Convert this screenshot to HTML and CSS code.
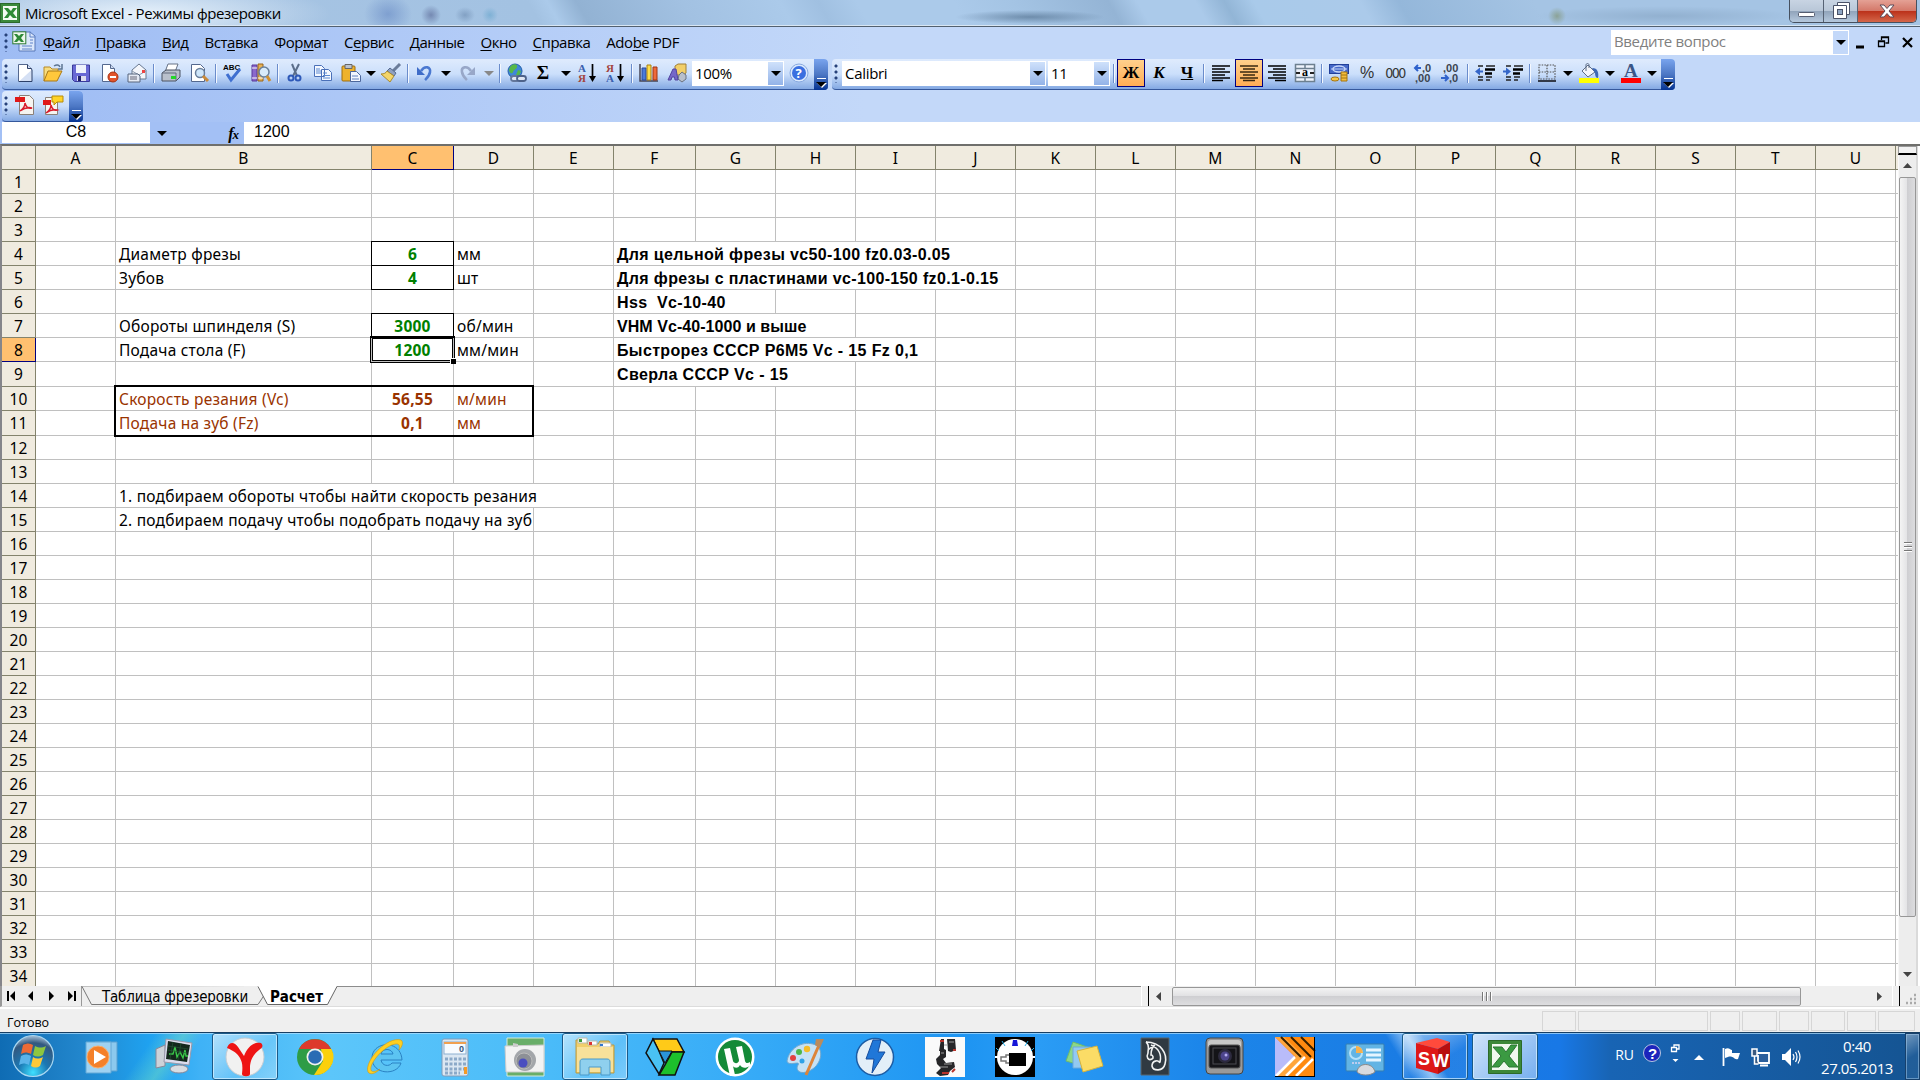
FILE: index.html
```
<!DOCTYPE html>
<html lang="ru">
<head>
    <meta charset="UTF-8">
    <title>Microsoft Excel - Режимы фрезеровки</title>
    <link rel="stylesheet" href="styles.css">
</head>
<body>

    <!-- Title bar -->
    <header class="titlebar">
        <svg class="app-icon" width="20" height="20" viewBox="0 0 20 20"><rect x=".5" y=".5" width="19" height="19" fill="#3c8a3c" stroke="#2c6a2c"/><rect x="3" y="3" width="14" height="14" fill="#f4faf2"/><path d="M4 5h4l3 3 2-3h4l-4 5 4 5h-4l-3-3-2 3H4l4-5z" fill="#2f8a35"/></svg>
        <h1 class="title">Microsoft Excel - Режимы фрезеровки</h1>
        <div class="window-buttons">
            <span class="win-min"><svg width="18" height="6"><rect x=".5" y=".5" width="16" height="4" rx="1" fill="#fff" stroke="#555d70"/></svg></span>
            <span class="win-max"><svg width="18" height="18"><path d="M5.500.5h12v12h-3v4h-13v-13h4z" fill="#fff" stroke="#4a5268"/><rect x="5.500" y="7.500" width="5" height="5" fill="#8fa6c4" stroke="#4a5268"/><path d="M4 3.500h10.500v10" fill="none" stroke="#4a5268"/></svg></span>
            <span class="win-close"><svg width="16" height="14"><path d="M1 1h4l3 3.500L11 1h4l-5 6 5 6h-4L8 9.500 5 13H1l5-6z" fill="#fff" stroke="#5b4b58"/></svg></span>
        </div>
    </header>

    <!-- Menu bar -->
    <nav class="menubar">
        <span class="grip"></span>
        <svg class="doc-icon" width="24" height="24" viewBox="0 0 24 24"><path d="M7 2h11l5 4v15H7z" fill="#dbe7fb" stroke="#5878b8"/><path d="M18 1.500V7h5M10 16h10M10 19h10M18 10h3M18 13h3" stroke="#5f82c8" fill="none"/><rect x=".8" y="1.800" width="13" height="12" fill="#eef7ec" stroke="#2e7a35"/><path d="M2 4h3l2 2 2-2h3L9 8l3 4H9L7 10l-2 2H2l3-4z" fill="#2e8a38"/></svg>
        <ul class="menu">
            <li><u>Ф</u>айл</li>
            <li><u>П</u>равка</li>
            <li><u>В</u>ид</li>
            <li>Вст<u>а</u>вка</li>
            <li>Фор<u>м</u>ат</li>
            <li>С<u>е</u>рвис</li>
            <li><u>Д</u>анные</li>
            <li><u>О</u>кно</li>
            <li><u>С</u>правка</li>
            <li>Ado<u>b</u>e PDF</li>
        </ul>
        <div class="question"><span>Введите вопрос</span><b class="arrow"></b></div>
        <div class="doc-buttons">
            <svg width="8" height="14"><path d="M0 12h8" stroke="#000" stroke-width="3"/></svg>
            <svg width="11" height="12"><path d="M3.500 4V1h7v6H7.500M3 1.500h8M.5 5h6v5.500h-6zM0 5.500h7" fill="none" stroke="#000" stroke-width="1.300"/></svg>
            <svg width="11" height="11"><path d="M1 1l9 9M10 1l-9 9" stroke="#000" stroke-width="2.200"/></svg>
        </div>
    </nav>

    <!-- Standard and formatting toolbars -->
    <div class="toolbars">
        <div class="toolbar standard">
            <span class="grip"></span>
            <i class="btn"><svg viewBox="0 0 20 20"><path d="M3.500 1.500h9l4 4v13h-13z" fill="#fff" stroke="#54688e"/><path d="M12.500 1.500v4h4M4 18.500h13v-12" fill="#d5e0f4" stroke="#2d4068"/></svg></i>
            <i class="btn"><svg viewBox="0 0 20 20"><path d="M1 18V4h6l2 2h6v3" fill="#f7dd80" stroke="#b88a24"/><path d="M1 18L5 8h14l-5 10z" fill="#ffc83c" stroke="#a87818"/><path d="M11 3c3-2 5-1 6 1m2-3v5h-4" fill="none" stroke="#5d7591" stroke-width="1.500"/></svg></i>
            <i class="btn"><svg viewBox="0 0 20 20"><path d="M1.500 2h17v16.500H3.500l-2-2z" fill="#6868d4" stroke="#3a3a9a"/><path d="M5 2h10v8H5z" fill="#eef2fc"/><path d="M6 13h9v5H6z" fill="#dde"/><path d="M7 13h3v5H7z" fill="#22226a"/></svg></i>
            <i class="btn"><svg viewBox="0 0 20 20"><path d="M3.500 1.500h8l4 4v13h-12z" fill="#fff" stroke="#54688e"/><path d="M11.500 1.500v4h4" fill="#cddaf0" stroke="#54688e"/><circle cx="14" cy="14" r="5" fill="#e2542c" stroke="#a83414"/><path d="M11 14h6" stroke="#fff" stroke-width="2"/></svg></i>
            <i class="btn"><svg viewBox="0 0 20 20"><path d="M5 7l7-6 7 6v9H5z" fill="#f4f6fb" stroke="#687890"/><path d="M5 8l7 4 7-4" fill="none" stroke="#8a99ae"/><rect x="15" y="7" width="3" height="3" fill="#e44"/><path d="M1 11h10l2 2v6H1z" fill="#e5eaf4" stroke="#56657d"/><path d="M3 14h7M3 16h7" stroke="#667"/></svg></i>
            <span class="sep"></span>
            <i class="btn"><svg viewBox="0 0 20 20"><path d="M7 1h10l-3 8H4z" fill="#fff" stroke="#667286"/><path d="M1 10l4-3h14v7l-4 4H1z" fill="#b9c0cc" stroke="#4a5262"/><path d="M1 10h14v8" fill="none" stroke="#626b7c"/><rect x="10" y="13" width="5" height="3" fill="#25d52a"/></svg></i>
            <i class="btn"><svg viewBox="0 0 20 20"><path d="M2.500 1.500h9l4 4v13h-13z" fill="#fff" stroke="#54688e"/><circle cx="11" cy="10" r="4.500" fill="#cfe6fa" stroke="#6a7f9c" stroke-width="1.500"/><path d="M14 13l5 5" stroke="#c98a3a" stroke-width="3"/></svg></i>
            <span class="sep"></span>
            <i class="btn"><svg viewBox="0 0 20 20"><text x="0" y="6.500" class="abc">ABC</text><path d="M4 11l4 6L17 6" fill="none" stroke="#3f6fd0" stroke-width="3"/></svg></i>
            <i class="btn"><svg viewBox="0 0 20 20"><path d="M1 2h5v16H1z" fill="#8a68cc" stroke="#58389a"/><path d="M7 1h5v17H7z" fill="#e8b254" stroke="#98651a"/><path d="M1 5h5M1 15h5M7 15h5" stroke="#fff"/><circle cx="13" cy="9" r="5" fill="#d8ebfb" stroke="#68809c" stroke-width="1.500"/><path d="M16 13l3 5" stroke="#cf9030" stroke-width="3"/></svg></i>
            <span class="sep"></span>
            <i class="btn"><svg viewBox="0 0 20 20"><path d="M7 1l5 12M14 1L8 13" stroke="#5b6e8a" stroke-width="2"/><circle cx="6" cy="15" r="2.500" fill="none" stroke="#2e59b8" stroke-width="2"/><circle cx="13" cy="15" r="2.500" fill="none" stroke="#2e59b8" stroke-width="2"/></svg></i>
            <i class="btn"><svg viewBox="0 0 20 20"><path d="M1.500 2.500h7l3 3v8h-10zM8.500 6.500h7l3 3v8h-10z" fill="#f4f8ff" stroke="#4a70b8"/><path d="M3 6h4M3 8h5M3 10h5M10 10h4M10 12.500h7M10 15h7" stroke="#5a88d0"/></svg></i>
            <i class="btn"><svg viewBox="0 0 20 20"><rect x="1" y="3" width="13" height="15" rx="1" fill="#eeb22c" stroke="#9c6c10"/><path d="M4 1.500h7v4H4z" fill="#bcc2cc" stroke="#666"/><path d="M9.500 8.500h6l4 4v6h-10z" fill="#f2f6ff" stroke="#4c679c"/><path d="M11 13h6M11 16h7" stroke="#6180bc"/></svg></i>
            <b class="arrow narrow"></b>
            <i class="btn"><svg viewBox="0 0 20 20"><path d="M19 1l-7 7" stroke="#6a7c9a" stroke-width="3"/><path d="M9 5l6 5-2 3-7-5z" fill="#8fa0c0" stroke="#566a90"/><path d="M6 8l7 5-4 6-9-8c3 0 5-1 6-3z" fill="#f4d569" stroke="#a88a30"/></svg></i>
            <span class="sep"></span>
            <i class="btn"><svg viewBox="0 0 20 20"><path d="M6 8c4-6 10-4 9 1-.5 4-3 6-5 8" fill="none" stroke="#4a78d0" stroke-width="2.600"/><path d="M2 4v8h8z" fill="#3e6cc8"/></svg></i>
            <b class="arrow"></b>
            <i class="btn"><svg viewBox="0 0 20 20"><path d="M14 8C10 2 4 4 5 9c.5 4 3 6 5 8" fill="none" stroke="#98a7c8" stroke-width="2.600"/><path d="M18 4v8h-8z" fill="#98a7c8"/></svg></i>
            <b class="arrow wide grey"></b>
            <span class="sep"></span>
            <i class="btn"><svg viewBox="0 0 20 20"><circle cx="8" cy="8" r="7" fill="#3f87d8" stroke="#2560a8"/><path d="M3 4c3-4 8-3 7 0S7 6 6 9s-4 0-4-2zM11 7l3 1-2 5-3-1z" fill="#56b848"/><rect x="4" y="13" width="8" height="5" rx="2.500" fill="#dfe6f2" stroke="#64779a" stroke-width="1.800"/><rect x="10" y="13" width="9" height="5" rx="2.500" fill="#dfe6f2" stroke="#4e638a" stroke-width="1.800"/></svg></i>
            <i class="btn glyph sum">Σ</i>
            <b class="arrow"></b>
            <i class="btn"><svg viewBox="0 0 20 20"><text x="1" y="8.500" class="az blue">А</text><text x="1" y="19" class="az red">Я</text><path d="M15.500 1v15" stroke="#000" stroke-width="1.700"/><path d="M12 13h7l-3.500 6z"/></svg></i>
            <i class="btn"><svg viewBox="0 0 20 20"><text x="1" y="8.500" class="az red">Я</text><text x="1" y="19" class="az blue">А</text><path d="M15.500 1v15" stroke="#000" stroke-width="1.700"/><path d="M12 13h7l-3.500 6z"/></svg></i>
            <span class="sep"></span>
            <i class="btn"><svg viewBox="0 0 20 20"><path d="M1 1v17h18" fill="none" stroke="#445" stroke-width="1.500"/><path d="M3 5h4v12H3z" fill="#4a7ad8" stroke="#28489a"/><path d="M8 2h4v15H8z" fill="#ffdd48" stroke="#a88010"/><path d="M14 4h4v13h-4z" fill="#ee6a3c" stroke="#a03410"/></svg></i>
            <i class="btn"><svg viewBox="0 0 20 20"><path d="M8 3l3-2h8v9l-3 2H8z" fill="#f2cf68" stroke="#a08038"/><path d="M12 12l3-3 4 3v4l-4 3-4-3z" fill="#b8bfcb" stroke="#6a7280"/><path d="M1 17L6 6h3l2 11H8l-.5-3H5l-1 3z" fill="#7567c8" stroke="#5244a0"/></svg></i>
            <div class="combo zoom-box"><span>100%</span><b class="arrow"></b></div>
            <i class="btn"><svg viewBox="0 0 20 20"><circle cx="10" cy="10" r="9" fill="#dbe9fd" stroke="#88a9e0"/><circle cx="10" cy="10" r="7" fill="#3a6fe0"/><text x="6.500" y="15" class="help">?</text></svg></i>
            <span class="overflow"></span>
        </div>

        <div class="toolbar formatting">
            <span class="grip"></span>
            <div class="combo font-box"><span>Calibri</span><b class="arrow"></b></div>
            <div class="combo size-box"><span>11</span><b class="arrow"></b></div>
            <span class="sep"></span>
            <i class="btn glyph active">Ж</i>
            <i class="btn glyph italic">К</i>
            <i class="btn glyph under">Ч</i>
            <span class="sep"></span>
            <i class="btn"><svg viewBox="0 0 20 20"><path d="M1 3h18M1 6h13M1 9h18M1 12h13M1 15h18M1 17.500h11" stroke="#000" stroke-width="1.400"/></svg></i>
            <i class="btn active"><svg viewBox="0 0 20 20"><path d="M1 3h18M4 6h12M1 9h18M4 12h12M1 15h18M4 17.500h12" stroke="#3a2810" stroke-width="1.400"/></svg></i>
            <i class="btn"><svg viewBox="0 0 20 20"><path d="M1 3h18M6 6h13M1 9h18M6 12h13M1 15h18M8 17.500h11" stroke="#000" stroke-width="1.400"/></svg></i>
            <i class="btn"><svg viewBox="0 0 20 20"><path d="M.5 1.500h19v17H.5zM.5 5.500h19M.5 14.500h19M10 1v4M10 15v4" fill="#eef3fc" stroke="#6d8090" stroke-width="1.500"/><path d="M1 10h4M15 10h4" stroke="#222" stroke-width="2"/><text x="7" y="13" class="merge">a</text></svg></i>
            <span class="sep"></span>
            <i class="btn"><svg viewBox="0 0 20 20"><rect x=".5" y="1.500" width="19" height="9" fill="#4568c8" stroke="#22409a"/><ellipse cx="10" cy="6" rx="6" ry="3" fill="none" stroke="#c4d4f8" stroke-width="1.500"/><path d="M2 6h16" stroke="#c4d4f8"/><path d="M12 9h6v9h-6z" fill="#f3bd3c" stroke="#a47410"/><ellipse cx="6" cy="16" rx="4" ry="2" fill="#f5c748" stroke="#a47410"/><path d="M12 12h6M12 15h6" stroke="#a47410"/></svg></i>
            <i class="btn numfmt">%</i>
            <i class="btn numfmt thousands">000</i>
            <i class="btn"><svg viewBox="0 0 20 20"><path d="M8 5H2m3-3L2 5l3 3" stroke="#2f62cc" stroke-width="2" fill="none"/><text x="9" y="9" class="dec">,0</text><text x="2" y="19" class="dec">,00</text></svg></i>
            <i class="btn"><svg viewBox="0 0 20 20"><text x="2" y="9" class="dec">,00</text><path d="M0 15h7m-3-3l3 3-3 3" stroke="#2f62cc" stroke-width="2" fill="none"/><text x="8" y="19" class="dec">,0</text></svg></i>
            <span class="sep"></span>
            <i class="btn"><svg viewBox="0 0 20 20"><path d="M3 3h5M11 3h9M3 14h5M11 14h6M3 17h5M11 17h4" stroke="#222" stroke-width="1.400"/><path d="M10 6.500h10M10 10.500h7" stroke="#000" stroke-width="2.600"/><path d="M0 8.500l5-4v3h3v2H5v3z" fill="#3466c8"/></svg></i>
            <i class="btn"><svg viewBox="0 0 20 20"><path d="M3 3h5M11 3h9M3 14h5M11 14h6M3 17h5M11 17h4" stroke="#222" stroke-width="1.400"/><path d="M10 6.500h10M10 10.500h7" stroke="#000" stroke-width="2.600"/><path d="M8 8.500l-5-4v3H0v2h3v3z" fill="#3466c8"/></svg></i>
            <span class="sep"></span>
            <i class="btn"><svg viewBox="0 0 20 20"><path d="M2 2h16v14H2zM10 2v14M2 9h16" fill="none" stroke="#555" stroke-width="1.200" stroke-dasharray="1.500 1.200"/><path d="M1 18h18" stroke="#333a48" stroke-width="2"/></svg></i>
            <b class="arrow"></b>
            <i class="btn"><svg viewBox="0 0 20 20"><path d="M9 2l7 7-7 5-6-6z" fill="#f3f5fa" stroke="#5d6c86"/><path d="M7 8V2c0-2 3-2 3 0v3" fill="none" stroke="#5d6c86"/><path d="M13 5c6 0 7 5 6 10-2 0-3-2-3-5z" fill="#3f68b4"/><path d="M0 15h20v5H0z" fill="#ff0"/></svg></i>
            <b class="arrow"></b>
            <i class="btn"><svg viewBox="0 0 20 20"><text x="3" y="14" class="font-a">A</text><path d="M0 15h20v5H0z" fill="#f00"/></svg></i>
            <b class="arrow"></b>
            <span class="overflow"></span>
        </div>
    </div>

    <!-- PDF toolbar -->
    <div class="toolbars pdf-row">
        <div class="toolbar pdf">
            <span class="grip"></span>
            <i class="btn"><svg viewBox="0 0 20 20"><path d="M4.500.5h10l4 4v15h-14z" fill="#f6f4f0" stroke="#8a8078"/><rect x="0" y="2" width="10" height="5" fill="#e01818"/><path d="M5 16c3-2 5-5 5-8 1 4 3 6 7 5-4-1-8 0-12 3z" fill="none" stroke="#d81c2c" stroke-width="1.500"/></svg></i>
            <i class="btn"><svg viewBox="0 0 20 20"><path d="M2.500 2.500h12v17h-12z" fill="#f6f4f0" stroke="#8a8078"/><rect x="0" y="5" width="8" height="5" fill="#e01818"/><path d="M3 18c3-2 5-5 5-8 1 4 3 6 6 5-4-1-7 0-11 3z" fill="none" stroke="#d81c2c" stroke-width="1.500"/><path d="M9 1h11v6h-6l-3 3V7H9z" fill="#ffd428" stroke="#b88c08"/></svg></i>
            <span class="overflow"></span>
        </div>
    </div>

    <!-- Name box and formula -->
    <div class="formulabar">
        <div class="name-box">C8</div>
        <b class="arrow"></b>
        <em class="fx"><span>f</span>x</em>
        <div class="formula">1200</div>
    </div>

    <!-- Sheet -->
    <main class="workspace">
        <div class="sheet" id="sheet"></div>
        <div class="vscroll">
            <span class="split"></span>
            <svg class="scroll-arrow" width="9" height="5"><path d="M0 5L4.500 0 9 5z" fill="#444"/></svg>
            <span class="vthumb"><i></i><i></i><i></i></span>
            <span class="filler"></span>
            <svg class="scroll-arrow" width="9" height="5"><path d="M0 0l4.500 5L9 0z" fill="#444"/></svg>
        </div>
    </main>

    <!-- Sheet tabs and horizontal scrollbar -->
    <div class="tabbar">
        <div class="tab-nav">
            <svg width="8" height="10"><path d="M1 0v10" stroke="#000" stroke-width="2"/><path d="M8 0v10L3 5z"/></svg>
            <svg width="8" height="10"><path d="M6 0v10L1 5z"/></svg>
            <svg width="8" height="10"><path d="M1 0v10l5-5z"/></svg>
            <svg width="8" height="10"><path d="M7 0v10" stroke="#000" stroke-width="2"/><path d="M0 0v10l5-5z"/></svg>
        </div>
        <div class="tabs">
            <svg class="tab-shapes" width="260" height="20"><path d="M0 .5l9.500 18H176l8-12V0" fill="#efefef" stroke="#777"/><path d="M176 0l9.500 18.500h60L255 0z" fill="#fff"/><path d="M176 .5l9.500 18h60L255 .5" fill="none" stroke="#666"/></svg>
            <span class="tab">Таблица фрезеровки</span>
            <span class="tab current">Расчет</span>
        </div>
        <div class="hscroll">
            <span class="hsplit"></span>
            <svg class="left-arrow" width="5" height="9"><path d="M5 0v9L0 4.500z" fill="#444"/></svg>
            <span class="hthumb"><i></i><i></i><i></i></span>
            <svg class="right-arrow" width="5" height="9"><path d="M0 0v9l5-4.500z" fill="#444"/></svg>
            <span class="hsplit end"></span>
            <svg class="resize" width="12" height="12"><path d="M9 2h2M9 6h2M5 6h2M9 10h2M5 10h2M1 10h2" stroke="#aaa" stroke-width="2.500"/></svg>
        </div>
    </div>

    <footer class="statusbar">
        <span class="status">Готово</span>
        <span class="pane w34"></span><span class="pane w130"></span><span class="pane w30"></span><span class="pane w35"></span><span class="pane w30"></span><span class="pane w34"></span><span class="pane w29"></span><span class="pane w37"></span>
    </footer>

    <!-- Windows taskbar -->
    <div class="taskbar">
        <div class="start"><svg width="44" height="44" viewBox="0 0 44 44">
            <defs><radialGradient id="orb" cx=".5" cy=".9" r=".9"><stop offset="0" stop-color="#3fe0ff"/><stop offset=".4" stop-color="#1b78b4"/><stop offset=".8" stop-color="#33587e"/><stop offset="1" stop-color="#a8c4dc"/></radialGradient></defs>
            <circle cx="22" cy="22" r="20.500" fill="url(#orb)" stroke="#a9d8f2" stroke-width="1.200"/>
            <path d="M12 11c4-2 7-2 10 0l-2 9c-4-2-7-2-10 0z" fill="#ee6a35"/><path d="M24 12c4 2 7 2 11 0l-3 9c-4 2-7 2-10 0z" fill="#8ec63f"/><path d="M10 22c3-2 6-2 10 0l-2 9c-4-2-7-2-10 0z" fill="#5ab4ea"/><path d="M22 23c3 2 6 2 10 0l-3 9c-3 2-6 2-9 0z" fill="#fdc938"/></svg></div>
        <div class="task"><svg viewBox="0 0 40 40"><path d="M10 5h22v29H10z" fill="#8cc9ee" stroke="#5aa0d0"/><path d="M1 5h25v31H1z" fill="#9fd2f2" stroke="#62a8d6"/><circle cx="13" cy="20" r="11" fill="#f4802a" stroke="#f8b070"/><path d="M9 13v14l12-7z" fill="#fff"/></svg></div>
        <div class="task"><svg viewBox="0 0 40 40"><path d="M1 12l9-4v21l-9 2z" fill="#cdd2d8" stroke="#889"/><path d="M11 2l26 4-3 22-25-3z" fill="#dde" stroke="#99a"/><path d="M13 4l22 4-3 17-21-3z" fill="#14281c"/><path d="M14 17h4l2-7 2 10 3-5 3 6 2-8 1 6h2" fill="none" stroke="#39c848" stroke-width="1.400"/><path d="M13 9l20 3M12 13l20 3M18 5l-3 17M26 6l-3 17" stroke="#245434" stroke-width=".7"/><ellipse cx="24" cy="32" rx="9" ry="4" fill="#d9dde2" stroke="#889"/></svg></div>
        <div class="task open"><svg viewBox="0 0 40 40"><circle cx="20" cy="20" r="19" fill="#f1f1f1" stroke="#c6ccd2"/><path d="M2 11c2-6 7-7 11-1 2 3 4 6 6 9 3-8 9-15 17-13 3 3 1 5-2 7-6 5-8 9-9 16v8c0 3-8 3-8 0 1-9 0-12-2-16-3-5-6-7-13-10z" fill="#ee1414"/></svg></div>
        <div class="task"><svg viewBox="0 0 40 40"><circle cx="20" cy="20" r="18" fill="#2e9c46"/><path d="M4 12A18 18 0 0 1 36 12H20z" fill="#dd3a2c"/><path d="M36.500 12A18 18 0 0 1 19 38l9-14-2-12z" fill="#fbd00c"/><circle cx="20" cy="20" r="8.500" fill="#f2f2ee"/><circle cx="20" cy="20" r="6.800" fill="#2a6cb4"/></svg></div>
        <div class="task"><svg viewBox="0 0 40 40"><path fill-rule="evenodd" d="M37 23H16c1 6 8 7 11 3h9c-4 13-29 12-29-5S36 2 37 23zM16 17h12c-1-6-11-6-12 0z" fill="#5cc4f2" stroke="#2a82c4"/><path d="M3 35C-1 24 22-1 36 3c3 2 1 7-2 10 1-5 0-6-3-6C20 8 4 26 6 33c1 3 6 1 9-1-5 5-10 6-12 3z" fill="#ffcf20" stroke="#cf9814" stroke-width=".6"/></svg></div>
        <div class="task"><svg viewBox="0 0 40 40"><rect x="7" y="2" width="26" height="37" rx="2" fill="#dbe7f2" stroke="#7f9bb8"/><rect x="9" y="5" width="22" height="12" fill="#f7fbff" stroke="#8db0d0"/><path d="M9 6h22" stroke="#f0a050" stroke-width="2"/><text x="24" y="15" class="calc">0</text><path d="M10 22h21M10 27h21M10 32h21M10 36h15" stroke="#8ba9c8" stroke-width="3" stroke-dasharray="3 1.500"/><path d="M29 30h3v7h-3z" fill="#f59a26"/></svg></div>
        <div class="task"><svg viewBox="0 0 40 40"><path d="M2 1h37v38H2z" fill="#69ae69" stroke="#d5ecdc"/><path d="M0 9l39-1v27H1z" fill="#f3f3f3" stroke="#ccc"/><circle cx="20" cy="23" r="11" fill="#a3a6aa"/><circle cx="19" cy="24" r="8" fill="#8d9096" stroke="#bbb"/><circle cx="18" cy="26" r="4.500" fill="#4a4ec0"/><path d="M8 6l5 1v3H8z" fill="#ccc"/></svg></div>
        <div class="task open"><svg viewBox="0 0 40 40"><path d="M1 3h10l2 4h10l2-3h9l2 4h3v28H1z" fill="#f1cf6c" stroke="#b89840"/><path d="M3 1h9v5H3zM13 4h9v4h-9zM25 6h11v4H25z" fill="#fff" stroke="#bba"/><path d="M4 2h3v3H4z" fill="#3c9c3c"/><path d="M14 5h3v3h-3z" fill="#d33"/><path d="M25 7h3v2h-3z" fill="#37c"/><path d="M2 10h36v25H2z" fill="#f8e19a"/><path d="M5 38V25c0-2 1-3 3-3h24c2 0 3 1 3 3v13h-9v-8H14v8z" fill="#8fd0ee" stroke="#4a9aca"/></svg></div>
        <div class="task"><svg viewBox="0 0 40 40"><path d="M8 2h24l7 13H14z" fill="#ffca18" stroke="#111" stroke-width="1.500"/><path d="M8 2l6 12 5 12-5 11L1 16z" fill="#49c2f4" stroke="#111" stroke-width="1.500"/><path d="M27 15h12L30 38H14l6-10z" fill="#1dc02c" stroke="#111" stroke-width="1.500"/><path d="M14 14h13l-7 12z" fill="#2b94da" stroke="#111"/></svg></div>
        <div class="task"><svg viewBox="0 0 40 40"><circle cx="20" cy="20" r="19.500" fill="#fff"/><circle cx="20" cy="20" r="17" fill="#148a38"/><path d="M9 12l6-1 3 13c1 3 6 3 6-1l-3-13 6-1 3 15c1 3 3 2 5 1v4c-5 3-8 2-10-1-2 4-6 3-7 1l2 9-5 1z" fill="#fff"/></svg></div>
        <div class="task"><svg viewBox="0 0 40 40"><path d="M2 24C4 12 16 4 28 7s9 20-2 26-16 0-13-5-10 2-11-4z" fill="#c6e2f5" stroke="#73a8ce"/><circle cx="8" cy="21" r="3" fill="#e14040"/><circle cx="14" cy="15" r="3" fill="#4bb74b"/><circle cx="22" cy="12" r="3.200" fill="#f5bd2a"/><circle cx="17" cy="24" r="2.500" fill="#2fa2e8"/><path d="M34 8L21 38" stroke="#dd853a" stroke-width="3"/><path d="M31 2l8 0-4 9-5-3z" fill="#b98b5e"/></svg></div>
        <div class="task"><svg viewBox="0 0 40 40"><circle cx="20" cy="20" r="18.500" fill="#e3eff8" stroke="#1c5ca4" stroke-width="1.500"/><path d="M18 3h8l-3 12h7L17 36l2-14h-8z" fill="#2077d8" stroke="#164c9c"/></svg></div>
        <div class="task"><svg viewBox="0 0 40 40"><path d="M0 0h40v40H0z" fill="#fafafa"/><path d="M16 2h3v10l2 1v7l-3 2 3 4 8-1 1 5-5 4-2 4-8 1-4-3 5-5-4-4-1-5 4-4v-4h-1zM22 2h8l1 11-5 2-3-1z" fill="#262628"/><path d="M15 4h4M28 13h3M17 36h7M27 35l3-3" stroke="#b8342c" stroke-width="2"/><path d="M19 8h4M24 5h5M16 16h3M15 30h8M19 27h8" stroke="#999" stroke-width="1.200"/></svg></div>
        <div class="task"><svg viewBox="0 0 40 40"><path d="M0 0h40v40H0z"/><circle cx="20" cy="20" r="18" fill="#fff"/><path d="M0 20h4M36 20h4" stroke="#fff" stroke-width="2"/><path d="M14 16h17v13H14z"/><path d="M14 18h-3v2H6v4h5v2h3" fill="#fff" stroke="#777" stroke-width="1.500"/><path d="M18 3h4l1 6h-6z" fill="#1616d8"/><path d="M7 4l3 5M33 4l-3 5M1 11l3 3M39 11l-3 3" stroke="#28aee8"/></svg></div>
        <div class="task"><svg viewBox="0 0 40 40"><path d="M8 5l17 6-7 18L1 24z" fill="#8bd888" stroke="#70ba6c"/><path d="M8 10h18v21H8z" fill="#93c9f2" stroke="#6aa8dc"/><path d="M12 14l20-5 6 20-20 6z" fill="#fbdc66" stroke="#d4b23c"/></svg></div>
        <div class="task"><svg viewBox="0 0 40 40"><path d="M6 1h28v37H6z" fill="#303a42" stroke="#59646c"/><path d="M11 5c15 0 22 12 19 22-2 8-12 7-13 2 0-5 6-7 8-3M11 5c4 3 2 7 2 11-2 4 0 8 4 6 2-1 1-4-1-4 0-4 1-8 4-10M16 8c7 3 11 9 9 17M13 13l6-5" fill="none" stroke="#f0f2f2" stroke-width="1.600"/></svg></div>
        <div class="task"><svg viewBox="0 0 40 40"><rect x="1" y="1" width="37" height="36" rx="4" fill="#999" stroke="#444"/><rect x="3" y="3" width="33" height="9" rx="3" fill="#c7c7c7"/><rect x="4" y="8" width="31" height="23" rx="2" fill="#141418" stroke="#555"/><rect x="8" y="11" width="23" height="16" fill="none" stroke="#4a4a50"/><circle cx="20" cy="19" r="7" fill="#2c2a3e"/><circle cx="20" cy="19" r="4.500" fill="#4d458c"/><circle cx="21" cy="18" r="1.500" fill="#b4acf0"/></svg></div>
        <div class="task"><svg viewBox="0 0 40 40"><path d="M0 0h40v40H0z" fill="#ff8a10"/><path d="M0 0l20 20L0 40z" fill="#b9bcfa"/><path d="M0 0l21 20L0 40h9l21-20L9 0z" fill="#ffa53c"/><path d="M6 0l20 20M16 0l20 20M26 0l14 14" stroke="#382000" stroke-width="2"/><path d="M1 39l19-19M11 39l19-19M21 39l17-17" stroke="#fff" stroke-width="2.500"/><path d="M0 39.500h40M39.500 0v40" stroke="#000"/></svg></div>
        <div class="task"><svg viewBox="0 0 40 40"><rect x="1" y="7" width="38" height="27" rx="1" fill="#62b4e4" stroke="#367faf"/><circle cx="11" cy="16" r="6" fill="none" stroke="#b5e2fa" stroke-width="2"/><path d="M11 16V9a7 7 0 0 1 7 7z" fill="#f7b14c"/><path d="M21 13h15M21 18h15M21 23h15" stroke="#e6f5ff" stroke-width="3"/><path d="M7 26h8" stroke="#bce" stroke-width="2" stroke-dasharray="2 1"/><path d="M12 35c1-10 16-10 18 0-5 4-14 4-18 0z" fill="#d7dadf" stroke="#888"/></svg></div>
        <div class="task open blue"><svg viewBox="0 0 40 40"><path d="M1 6L22 1l13 4-12 7z" fill="#ff4a3c"/><path d="M1 6l22 6v25L1 31z" fill="#de1818"/><path d="M23 12l12-7v25l-12 7z" fill="#b80f0f"/><text x="3" y="28" class="sw">S</text><text x="17" y="30" class="sw">W</text></svg></div>
        <div class="task open bright"><svg viewBox="0 0 40 40"><path d="M3.500 3.500h33v33h-33z" fill="#3c8838" stroke="#2b6a2a"/><path d="M7 7h26v26H7z" fill="#f1f8ef"/><path d="M8 10h9l4 5 5-7h6l-8 11 9 11h-9l-5-6-5 6H7l9-11z" fill="#3b9a42" stroke="#2b7732"/></svg></div>
        <div class="tray">
            <span class="lang">RU</span>
            <svg width="18" height="18" class="q-icon"><circle cx="9" cy="9" r="8.500" fill="#1c24bc" stroke="#b9c6e2"/><text x="5" y="14.500" class="tray-q">?</text></svg>
            <svg width="9" height="20" class="bar-ctl"><path d="M.5 3.500h5v4h-5zM3 3V1h5v4H6" fill="none" stroke="#fff" stroke-width="1.300"/><path d="M1.500 15h6L4.500 18z" fill="#fff"/></svg>
            <svg width="10" height="6" class="up"><path d="M0 6l5-5 5 5z" fill="#fff"/></svg>
            <svg width="20" height="20"><path d="M2.500 1v18" stroke="#fff" stroke-width="1.800"/><path d="M4 2c4-2 5 1 7 1v3h8l-2 6c-4 1-4-2-6-2-2-1-4 0-7 1z" fill="#fff"/></svg>
            <svg width="20" height="20"><path d="M5 6h13v10H7V8" fill="#2b5f9c" stroke="#fff" stroke-width="1.800"/><path d="M9 18.500h8" stroke="#fff" stroke-width="2"/><path d="M1 2h5v7H1zM3.500 9v8h4" fill="#3a5a80" stroke="#fff" stroke-width="1.500"/></svg>
            <svg width="20" height="20"><path d="M1 7h3l6-6v18l-6-6H1z" fill="#fff"/><path d="M12 7q2 3 0 6M14.500 5q3 5 0 10M17 3.500q4 6.500 0 13" fill="none" stroke="#fff" stroke-width="1.200"/></svg>
            <div class="clock"><span>0:40</span><span>27.05.2013</span></div>
        </div>
        <span class="show-desktop"></span>
    </div>

    <script src="script.js"></script>
</body>
</html>
```

FILE: styles.css
```
* {
    margin: 0;
    padding: 0;
    box-sizing: border-box;
}

body {
    width: 1920px;
    height: 1080px;
    overflow: hidden;
    font-family: "Open Sans", "Noto Sans", sans-serif;
    font-size: 15px;
    color: #000;
    background: #efefef;
    display: flex;
    flex-direction: column;
}

svg {
    display: block;
    flex: none;
    overflow: visible;
}

/* Title bar */
.titlebar {
    height: 27px;
    display: flex;
    align-items: flex-start;
    border-bottom: 1px solid #52606f;
    box-shadow: inset 0 -1px #d8e6f3;
    background:
        radial-gradient(ellipse 190px 34px at 140px 14px, rgba(235, 244, 252, .95), transparent),
        radial-gradient(circle 10px at 431px 15px, rgba(70, 80, 130, .5), transparent),
        radial-gradient(ellipse 24px 20px at 388px 14px, rgba(90, 125, 190, .5), transparent),
        radial-gradient(ellipse 10px 8px at 465px 15px, rgba(80, 110, 150, .4), transparent),
        radial-gradient(circle 8px at 490px 15px, rgba(90, 160, 200, .5), transparent),
        radial-gradient(ellipse 75px 7px at 1030px 17px, rgba(75, 105, 135, .6), transparent),
        radial-gradient(circle 9px at 1557px 16px, rgba(130, 150, 120, .7), transparent),
        radial-gradient(ellipse 130px 10px at 1665px 16px, rgba(110, 140, 170, .35), transparent),
        linear-gradient(60deg, #a8c5e4 0, #a3c2e2 28%, #abcaea 29%, #92b2d3 30.500%, #a2c1e2 36%, #abcaea 41%, #a0c0e1 43%, #abcaea 45%, #abcaea 50%, #a4c4e4 53%, #94b4d5 58%, #abcaea 59.500%, #abcaea 62.500%, #92b5d6 64%, #a9caea 65.500%, #abcaea 71%, #94b7da 73%, #a5c4e4 80%, #a5c4e4 100%);
}

.app-icon {
    margin: 3px 0 0;
}

.title {
    flex: 1;
    margin-left: 5px;
    font-size: 15px;
    font-weight: normal;
    line-height: 27px;
    white-space: nowrap;
    letter-spacing: -.43px;
}

.window-buttons {
    display: flex;
    width: 128px;
    height: 23px;
    margin-right: 3px;
    border: 1px solid #46505f;
    border-top: 0;
    border-radius: 0 0 5px 5px;
    overflow: hidden;
}

.window-buttons span {
    width: 34px;
    display: flex;
    justify-content: center;
    align-items: center;
    border-right: 1px solid #566274;
    background: linear-gradient(#c8d4e3, #b9c7d8 48%, #90a3ba 50%, #b5c8dd);
}

.window-buttons .win-min {
    padding-top: 8px;
}

.window-buttons .win-close {
    flex: 1;
    border: 0;
    background: linear-gradient(#e4a195, #d4796a 48%, #bb3019 50%, #d46649);
}

/* Menu bar */
.menubar {
    height: 32px;
    display: flex;
    align-items: center;
    padding-bottom: 2px;
    background: linear-gradient(90deg, #9ebcf4, #c3d8f9 45%);
}

.grip {
    width: 9px;
    height: 19px;
    flex: none;
    background: radial-gradient(circle at 4px 2px, #27427a 1.300px, transparent 1.800px) 0 0 / 9px 6px;
}

.menubar .grip {
    margin-left: 2px;
}

.doc-icon {
    margin: 0 7px 0 1px;
}

.menu {
    display: flex;
    flex: 1;
    gap: 16px;
    list-style: none;
    letter-spacing: -.46px;
    line-height: 30px;
}

.menu li {
    white-space: nowrap;
}

u {
    text-underline-offset: 2px;
    text-decoration-thickness: 1px;
}

.question {
    width: 238px;
    height: 25px;
    display: flex;
    justify-content: space-between;
    background: #fff;
    border: 1px solid #fff;
    margin-right: 7px;
    color: #808080;
}

.question span {
    padding-left: 2px;
    line-height: 21px;
    letter-spacing: -.35px;
}

.question .arrow {
    background-color: #c3d8f9;
}

.doc-buttons {
    width: 57px;
    display: flex;
    justify-content: space-between;
    align-items: center;
    margin-right: 7px;
}

/* Toolbars */
.toolbars {
    height: 32px;
    display: flex;
    gap: 4px;
    padding-left: 2px;
    background: linear-gradient(90deg, #9ebcf4, #c3d8f9 45%);
}

.toolbar {
    height: 31px;
    display: flex;
    align-items: center;
    padding-bottom: 2px;
    border-radius: 4px;
    border-bottom: 1px solid #35589c;
    background: linear-gradient(#dfebfd, #cbdffb 50%, #84a9e3);
}

.standard {
    width: 826px;
}

.formatting {
    width: 843px;
}

.pdf {
    width: 81px;
}

.pdf-row {
    height: 31px;
}

.btn {
    width: 28px;
    height: 28px;
    flex: none;
    display: flex;
    justify-content: center;
    align-items: center;
    font-style: normal;
}

.btn svg {
    width: 20px;
    height: 20px;
}

.active {
    border: 1px solid #000080;
    background: linear-gradient(#ffd08c, #ffad55);
}

.glyph {
    font-family: "Liberation Serif", serif;
    font-weight: bold;
    font-size: 17px;
}

.sum {
    font-size: 19px;
    padding-right: 4px;
}

.italic {
    font-style: italic;
}

.under {
    text-decoration: underline;
}

.numfmt {
    font-family: "Liberation Sans", sans-serif;
    font-size: 16px;
    color: #333;
}

.thousands {
    font-size: 14px;
    letter-spacing: -1.500px;
    font-family: "DejaVu Sans Condensed", "DejaVu Sans", sans-serif;
}

.sep {
    width: 6px;
    height: 19px;
    flex: none;
    background: linear-gradient(90deg, transparent 2px, #6a8ccb 2px, #6a8ccb 3px, #f4f8ff 3px, #f4f8ff 4px, transparent 4px);
}

.arrow {
    width: 14px;
    flex: none;
    display: flex;
    justify-content: center;
    align-items: center;
}

.arrow::before {
    content: "";
    border: 5px solid transparent;
    border-top-color: #000;
    border-bottom: 0;
}

.narrow {
    width: 12px;
}

.wide {
    width: 16px;
}

.grey::before {
    border-top-color: #888;
}

.combo {
    height: 25px;
    flex: none;
    display: flex;
    justify-content: space-between;
    background: #fff;
    border: 1px solid #fff;
}

.combo span {
    padding-left: 2px;
    line-height: 22px;
    letter-spacing: -.3px;
}

.combo .arrow,
.question .arrow {
    width: 15px;
}

.combo .arrow {
    background: linear-gradient(#cfe1fb, #93b3e8);
}

.zoom-box {
    width: 92px;
    margin: 0 1px;
}

.font-box {
    width: 204px;
    margin: 0 2px 0 1px;
}

.size-box {
    width: 62px;
    margin-right: 1px;
}

.overflow {
    width: 14px;
    height: 31px;
    margin: 0 0 -3px auto;
    border-radius: 0 4px 4px 0;
    display: flex;
    flex-direction: column;
    align-items: center;
    justify-content: flex-end;
    gap: 3px;
    padding-bottom: 3px;
    background: linear-gradient(#79a4ee, #4c77c4 50%, #053392);
}

.overflow::before {
    content: "";
    width: 9px;
    height: 1px;
    background: #fff;
}

.overflow::after {
    content: "";
    border: 5px solid transparent;
    border-top-color: #000;
    border-bottom: 0;
    filter: drop-shadow(1px 1px #fff);
}

.abc {
    font: bold 8px "Liberation Sans", sans-serif;
}

.az {
    font: bold 11px "Liberation Serif", serif;
}

.blue {
    fill: #3a5fae;
}

.red {
    fill: #a3443c;
}

.help {
    font: bold 13px "Open Sans", sans-serif;
    fill: #fff;
}

.merge {
    font: bold 12px "Liberation Serif", serif;
}

.dec {
    font: bold 11px "Liberation Sans", sans-serif;
    fill: #3c4450;
}

.font-a {
    font: bold 19px "Liberation Serif", serif;
    fill: #3a5688;
}

/* Formula bar */
.formulabar {
    height: 22px;
    display: flex;
    padding-left: 2px;
    background: #a3c0f5;
    font-size: 16px;
    line-height: 19px;
    font-family: "Liberation Sans", sans-serif;
}

.name-box {
    width: 148px;
    height: 21px;
    background: #fff;
    text-align: center;
}

.formulabar .arrow {
    width: 23px;
}

.fx {
    width: 71px;
    padding: 2px 5px 0 0;
    text-align: right;
    font: italic bold 13px/19px "Liberation Serif", serif;
}

.fx span {
    font-size: 16px;
    margin-right: -1px;
}

.formula {
    flex: 1;
    padding-left: 10px;
    background: #fff;
}

/* Worksheet */
.workspace {
    height: 842px;
    display: flex;
    border-top: 2px solid #6f6f6c;
    border-left: 2px solid #85858a;
    background: #fff;
}

.sheet {
    width: 1896px;
    overflow: hidden;
    font-family: "Noto Sans", sans-serif;
    font-size: 15.500px;
}

.row {
    height: 24px;
    display: grid;
    grid-template-columns: 34px 80px 256px 82px 80px 80px 82px repeat(15, 80px) 3px;
    grid-template-rows: 100%;
}

.row.tall {
    height: 25px;
}

.cell {
    position: relative;
    padding-left: 3px;
    line-height: 25px;
    letter-spacing: .22px;
    white-space: nowrap;
    border-right: 1px solid #c0c0c0;
    border-bottom: 1px solid #c0c0c0;
}

.cell:last-child {
    border-right: 0;
}

.head {
    padding: 0;
    text-align: center;
    background: #f0ebdf;
    border-color: #84836c;
}

.head.selected {
    background: #ffc070;
    border-color: #000080;
}

.input,
.result {
    padding: 0;
    text-align: center;
    font-weight: bold;
}

.input {
    color: #008000;
}

.brown {
    color: #993300;
}

.boxed::after {
    content: "";
    position: absolute;
    z-index: 1;
    inset: -1px;
    border: 1px solid #000;
}

.cursor::after {
    content: "";
    position: absolute;
    z-index: 2;
    inset: -2px;
    border: 3px double #000;
}

.cursor::before {
    content: "";
    position: absolute;
    z-index: 3;
    right: -3px;
    bottom: -3px;
    width: 5px;
    height: 5px;
    background: #000;
    border: solid #fff;
    border-width: 1px 0 0 1px;
}

.outline {
    position: absolute;
    z-index: 1;
    left: -2px;
    top: -2px;
    width: 420px;
    height: 52px;
    border: 2px solid #000;
}

.note {
    font-family: "Liberation Sans", sans-serif;
    font-weight: bold;
    font-size: 16px;
    letter-spacing: .36px;
}

.note.tight {
    letter-spacing: .06px;
}

.vscroll {
    width: 20px;
    display: flex;
    flex-direction: column;
    align-items: center;
    background: #ededed;
    border-right: 2px solid #dadada;
    border-left: 1px solid #f8f8f8;
}

.split {
    width: 19px;
    height: 9px;
    border: 1px solid #999;
    border-bottom: 2px solid #000;
    background: #f2f2f2;
}

.scroll-arrow {
    margin: 8px 0 9px;
}

.vthumb {
    width: 17px;
    height: 740px;
    display: flex;
    flex-direction: column;
    justify-content: center;
    align-items: center;
    gap: 2px;
    border: 1px solid #979797;
    border-radius: 2px;
    background: linear-gradient(90deg, #f4f4f4, #e4e4e6 45%, #cfcfd2 50%, #dcdcde);
}

.vthumb i {
    width: 8px;
    height: 2px;
    background: #777;
    border-bottom: 1px solid #fff;
}

.filler {
    flex: 1;
}

/* Sheet tabs */
.tabbar {
    height: 21px;
    display: flex;
    border-left: 2px solid #999;
    border-bottom: 1px solid #dcdcdc;
    background: #efefef;
}

.tab-nav {
    width: 80px;
    display: flex;
    justify-content: space-between;
    align-items: center;
    padding: 0 5px;
    border-right: 1px solid #999;
}

.tabs {
    width: 1059px;
    position: relative;
    display: flex;
    border-top: 1px solid #8c8c8c;
    font-family: "DejaVu Sans Condensed", "DejaVu Sans", sans-serif;
    font-size: 15px;
    line-height: 20px;
}

.tab-shapes {
    position: absolute;
    left: 0;
    top: -1px;
}

.tab {
    position: relative;
    width: 168px;
    padding-left: 20px;
    white-space: nowrap;
    letter-spacing: -.2px;
}

.current {
    font-weight: bold;
    letter-spacing: -.05px;
}

.hscroll {
    flex: 1;
    display: flex;
    align-items: center;
}

.hsplit {
    width: 8px;
    height: 20px;
    border: 1px solid #aaa;
    border-width: 0 1px;
    border-left-color: #fff;
    border-right: 1px solid #000;
    background: #f0f0f0;
}

.left-arrow {
    margin: 0 11px 0 7px;
}

.hthumb {
    width: 629px;
    height: 19px;
    display: flex;
    justify-content: center;
    align-items: center;
    gap: 2px;
    border: 1px solid #979797;
    border-radius: 2px;
    background: linear-gradient(#f3f3f3, #e2e2e4 45%, #cfcfd2 50%, #dedee0);
}

.hthumb i {
    width: 2px;
    height: 9px;
    background: #777;
    border-right: 1px solid #fff;
}

.right-arrow {
    margin: 0 10px 0 76px;
}

.resize {
    margin: 5px 0 0 5px;
}

/* Status bar */
.statusbar {
    height: 25px;
    display: flex;
    align-items: flex-end;
    gap: 2px;
    padding: 0 5px 1px 7px;
    border-top: 2px solid #fff;
    font-size: 12.500px;
    background: #efefef;
}

.status {
    flex: 1;
    line-height: 17px;
}

.pane {
    height: 20px;
    border: 1px solid #d6d6d6;
}

.w29 { width: 29px; }
.w30 { width: 30px; }
.w34 { width: 34px; }
.w35 { width: 35px; }
.w37 { width: 37px; }
.w130 { width: 130px; }

/* Taskbar */
.taskbar {
    height: 48px;
    display: flex;
    gap: 4px;
    border-top: 1px solid #173e62;
    box-shadow: inset 0 1px rgba(180, 225, 255, .7);
    background:
        linear-gradient(58deg, transparent 72.500%, rgba(220, 240, 255, .6) 73.600%, transparent 74.400%),
        linear-gradient(125deg, transparent 8%, rgba(120, 225, 190, .45) 9.500%, transparent 10.500%),
        linear-gradient(90deg, #0f6cb4 0, #2286cc 80px, #1fa2f0 150px, #3fb2f6 200px, #5cc6fa 330px, #4bbcf9 540px, #35aaf7 760px, #1d94f2 960px, #2a9cf5 1040px, #1c86ea 1200px, #1a7ce4 1400px, #1878e6 1560px, #1864b4 1610px, #155594 1900px);
}

.start {
    width: 68px;
    padding: 1px 0 0 11px;
}

.task {
    width: 66px;
    height: 47px;
    flex: none;
    display: flex;
    justify-content: center;
    align-items: center;
}

.task svg {
    width: 40px;
    height: 40px;
}

.open {
    border: 1px solid #1b5a88;
    border-radius: 3px;
    box-shadow: inset 0 0 0 1px rgba(220, 242, 255, .7);
    background: linear-gradient(135deg, rgba(255, 255, 255, .6), rgba(255, 255, 255, .15) 60%, rgba(255, 255, 255, .3));
}

.open.blue {
    background: linear-gradient(150deg, rgba(255, 255, 255, .55), rgba(255, 255, 255, .05) 60%);
}

.open.bright {
    background: linear-gradient(135deg, rgba(255, 255, 255, .8), rgba(255, 255, 255, .4));
}

.calc {
    font: bold 9px "Liberation Sans", sans-serif;
    fill: #3a5578;
}

.sw {
    font: bold 18px "Liberation Sans", sans-serif;
    fill: #fff;
}

.tray {
    flex: 1;
    display: flex;
    align-items: center;
    justify-content: flex-end;
    gap: 10px;
    color: #fff;
}

.lang {
    font-size: 14px;
    margin: -5px -1px 0 0;
}

.q-icon {
    margin-top: -8px;
}

.tray-q {
    font: bold 15px "Liberation Sans", sans-serif;
    fill: #fff;
}

.bar-ctl {
    margin-top: -6px;
}

.up {
    margin: 1px 7px 0 4px;
}

.clock {
    width: 92px;
    display: flex;
    flex-direction: column;
    align-items: center;
    margin-right: -2px;
    line-height: 22px;
    letter-spacing: -.45px;
}

.show-desktop {
    width: 15px;
    border: 1px solid #16406c;
    box-shadow: inset 0 0 0 1px rgba(170, 205, 235, .5);
    background: linear-gradient(150deg, rgba(255, 255, 255, .4), rgba(255, 255, 255, .05) 50%);
}
```

FILE: script.js
```
const columns = 'ABCDEFGHIJKLMNOPQRSTU'.split('');
const rowCount = 34;
const activeCell = 'C8';

// text, classes, and how many columns the text runs across
const cells = {
    B4: { text: 'Диаметр фрезы' },
    C4: { text: '6', cls: 'input boxed' },
    D4: { text: 'мм' },
    F4: { text: 'Для цельной фрезы vc50-100 fz0.03-0.05', cls: 'note', span: 5 },
    B5: { text: 'Зубов' },
    C5: { text: '4', cls: 'input boxed' },
    D5: { text: 'шт' },
    F5: { text: 'Для фрезы с пластинами vc-100-150 fz0.1-0.15', cls: 'note', span: 5 },
    F6: { text: 'Hss \u00a0Vc-10-40', cls: 'note', span: 2 },
    B7: { text: 'Обороты шпинделя (S)' },
    C7: { text: '3000', cls: 'input boxed' },
    D7: { text: 'об/мин' },
    F7: { text: 'VHM Vc-40-1000 и выше', cls: 'note tight', span: 3 },
    B8: { text: 'Подача стола (F)' },
    C8: { text: '1200', cls: 'input cursor' },
    D8: { text: 'мм/мин' },
    F8: { text: 'Быстрорез СССР Р6М5 Vc - 15 Fz 0,1', cls: 'note', span: 4 },
    F9: { text: 'Сверла СССР Vc - 15', cls: 'note', span: 3 },
    B10: { text: 'Скорость резания (Vc)', cls: 'brown', outline: true },
    C10: { text: '56,55', cls: 'result brown' },
    D10: { text: 'м/мин', cls: 'brown' },
    B11: { text: 'Подача на зуб (Fz)', cls: 'brown' },
    C11: { text: '0,1', cls: 'result brown' },
    D11: { text: 'мм', cls: 'brown' },
    B14: { text: '1. подбираем обороты чтобы найти скорость резания', span: 4 },
    B15: { text: '2. подбираем подачу чтобы подобрать подачу на зуб', span: 3 }
};

const sheet = document.getElementById('sheet');

function addCell(row, text, cls) {
    const cell = document.createElement('div');
    cell.className = 'cell ' + (cls || '');
    cell.textContent = text;
    row.appendChild(cell);
    return cell;
}

function addRow(tall) {
    const row = document.createElement('div');
    row.className = tall ? 'row tall' : 'row';
    sheet.appendChild(row);
    return row;
}

// Column letters
const header = addRow(false);
addCell(header, '', 'head');
columns.forEach(c => addCell(header, c, c === activeCell[0] ? 'head selected' : 'head'));
addCell(header, '', 'head');

// Numbered rows
for (let r = 1; r <= rowCount; r++) {
    const row = addRow(r === 9 || r === 11);
    addCell(row, r, String(r) === activeCell.slice(1) ? 'head selected' : 'head');
    for (let i = 0; i < columns.length; i++) {
        const data = cells[columns[i] + r] || { text: '' };
        const cell = addCell(row, data.text, data.cls);
        if (data.span) {
            cell.style.gridColumn = 'span ' + data.span;
            i += data.span - 1;
        }
        if (data.outline) {
            const frame = document.createElement('span');
            frame.className = 'outline';
            cell.appendChild(frame);
        }
    }
    addCell(row, '');
}
```
